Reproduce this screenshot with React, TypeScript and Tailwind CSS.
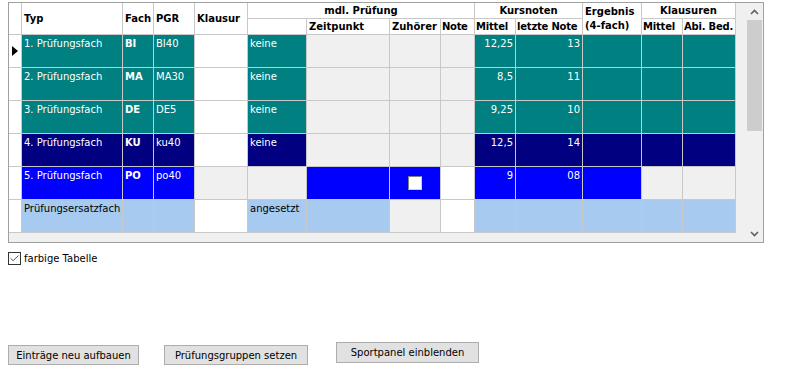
import { Check } from "lucide-react";

type Cell = { bg: string; text?: string; right?: boolean; bold?: boolean; check?: boolean };

const TEAL = "bg-[#008080] text-white";
const NAVY = "bg-[#000080] text-white";
const BLUE = "bg-[#0000ff] text-white";
const SKY = "bg-[#a6caf0] text-black";
const GRAY = "bg-[#f0f0f0] text-black";
const WHITE = "bg-white text-black";

function examRow(bg: string, typ: string, fach: string, pgr: string, mittel: string, letzte: string): Cell[] {
  return [
    { bg, text: typ },
    { bg, text: fach, bold: true },
    { bg, text: pgr },
    { bg: WHITE },
    { bg, text: "keine" },
    { bg: GRAY },
    { bg: GRAY },
    { bg: GRAY },
    { bg, text: mittel, right: true },
    { bg, text: letzte, right: true },
    { bg },
    { bg },
    { bg },
  ];
}

const rows: Cell[][] = [
  examRow(TEAL, "1. Prüfungsfach", "BI", "BI40", "12,25", "13"),
  examRow(TEAL, "2. Prüfungsfach", "MA", "MA30", "8,5", "11"),
  examRow(TEAL, "3. Prüfungsfach", "DE", "DE5", "9,25", "10"),
  examRow(NAVY, "4. Prüfungsfach", "KU", "ku40", "12,5", "14"),
  [
    { bg: BLUE, text: "5. Prüfungsfach" },
    { bg: BLUE, text: "PO", bold: true },
    { bg: BLUE, text: "po40" },
    { bg: GRAY },
    { bg: GRAY },
    { bg: BLUE },
    { bg: BLUE, check: true },
    { bg: WHITE },
    { bg: BLUE, text: "9", right: true },
    { bg: BLUE, text: "08", right: true },
    { bg: BLUE },
    { bg: GRAY },
    { bg: GRAY },
  ],
  [
    { bg: SKY, text: "Prüfungsersatzfach" },
    { bg: SKY },
    { bg: SKY },
    { bg: WHITE },
    { bg: SKY, text: "angesetzt" },
    { bg: SKY },
    { bg: GRAY },
    { bg: WHITE },
    { bg: SKY },
    { bg: SKY },
    { bg: SKY },
    { bg: SKY },
    { bg: SKY },
  ],
];

function Chevron({ up }: { up?: boolean }) {
  return (
    <svg width="9" height="6" viewBox="0 0 9 6">
      <path
        d={up ? "M1 5 L4.5 1.5 L8 5" : "M1 1 L4.5 4.5 L8 1"}
        fill="none"
        stroke="#606060"
        strokeWidth="1.6"
      />
    </svg>
  );
}

export default function App() {
  return (
    <main className="min-h-screen w-[790px] bg-white pl-[8px] pt-[2px] font-['DejaVu_Sans',sans-serif] text-[10px] text-black">
      {/* Grid */}
      <div className="flex w-[756px] h-[241px] border border-[#a0a0a0]">
        <div className="flex-1 bg-[#f0f0f0]">
          <div className="grid w-fit gap-px bg-[#c8c8c8] border-r border-b border-[#c8c8c8] grid-cols-[12px_100px_30px_40px_52px_58px_82px_50px_33px_40px_66px_58px_40px_52px] grid-rows-[15px_15px_repeat(6,32px)] leading-[12px] whitespace-nowrap">
            {/* header */}
            <div className="row-span-2 bg-white" />
            <div className="row-span-2 bg-white font-bold flex items-center px-[2px]">Typ</div>
            <div className="row-span-2 bg-white font-bold flex items-center px-[2px]">Fach</div>
            <div className="row-span-2 bg-white font-bold flex items-center px-[2px]">PGR</div>
            <div className="row-span-2 bg-white font-bold flex items-center px-[2px]">Klausur</div>
            <div className="col-span-4 bg-white font-bold flex items-center justify-center">mdl. Prüfung</div>
            <div className="col-span-2 bg-white font-bold flex items-center justify-center">Kursnoten</div>
            <div className="row-span-2 bg-white font-bold flex flex-col px-[2px] pt-[2px] leading-[14px]">
              <span>Ergebnis</span>
              <span>(4-fach)</span>
            </div>
            <div className="col-span-2 bg-white font-bold flex items-center justify-center">Klausuren</div>
            <div className="bg-white" />
            <div className="bg-white font-bold flex items-center px-[2px]">Zeitpunkt</div>
            <div className="bg-white font-bold flex items-center px-[2px]">Zuhörer</div>
            <div className="bg-white font-bold flex items-center px-[1px] tracking-[-0.3px]">Note</div>
            <div className="bg-white font-bold flex items-center px-[1px] tracking-[-0.2px]">Mittel</div>
            <div className="bg-white font-bold flex items-center px-[1px] tracking-[-0.2px]">letzte Note</div>
            <div className="bg-white font-bold flex items-center px-[1px] tracking-[-0.2px]">Mittel</div>
            <div className="bg-white font-bold flex items-center px-[1px] tracking-[-0.2px]">Abi. Bed.</div>

            {/* body */}
            {rows.map((row, r) => (
              <div key={r} className="contents">
                <div className="bg-white flex items-center justify-center">
                  {r === 0 && (
                    <svg width="6" height="10" viewBox="0 0 6 10">
                      <path d="M0 0 L6 5 L0 10 Z" fill="#000" />
                    </svg>
                  )}
                </div>
                {row.map((c, i) => (
                  <div
                    key={i}
                    className={`${c.bg} px-[2px] pt-[3px] ${c.right ? "text-right" : ""} ${c.bold ? "font-bold" : ""} ${c.check ? "flex items-center justify-center !pt-0" : ""}`}
                  >
                    {c.check ? (
                      <span className="block w-[14px] h-[14px] bg-white border border-[#808080] border-r-[#d0d0d0] border-b-[#d0d0d0]" />
                    ) : (
                      c.text
                    )}
                  </div>
                ))}
              </div>
            ))}
          </div>
        </div>

        {/* Scrollbar */}
        <div className="w-[17px] bg-[#f0f0f0] flex flex-col items-center">
          <div className="h-[17px] flex items-center justify-center">
            <Chevron up />
          </div>
          <div className="w-[15px] h-[111px] bg-[#cdcdcd]" />
          <div className="flex-1" />
          <div className="h-[17px] flex items-center justify-center">
            <Chevron />
          </div>
        </div>
      </div>

      {/* Checkbox */}
      <div className="mt-[9px] flex items-center gap-[3px] h-[13px]">
        <span className="w-[13px] h-[13px] border border-[#333333] bg-white flex items-center justify-center">
          <Check className="w-[11px] h-[11px] text-[#444444]" strokeWidth={2} />
        </span>
        <span>farbige Tabelle</span>
      </div>

      {/* Buttons */}
      <div className="mt-[77px] flex items-start">
        <button className="mt-[3px] w-[131px] h-[20px] bg-[#e1e1e1] border border-[#adadad]">
          Einträge neu aufbauen
        </button>
        <button className="ml-[25px] mt-[3px] w-[144px] h-[20px] bg-[#e1e1e1] border border-[#adadad]">
          Prüfungsgruppen setzen
        </button>
        <button className="ml-[28px] w-[143px] h-[21px] bg-[#e1e1e1] border border-[#adadad]">
          Sportpanel einblenden
        </button>
      </div>
    </main>
  );
}
